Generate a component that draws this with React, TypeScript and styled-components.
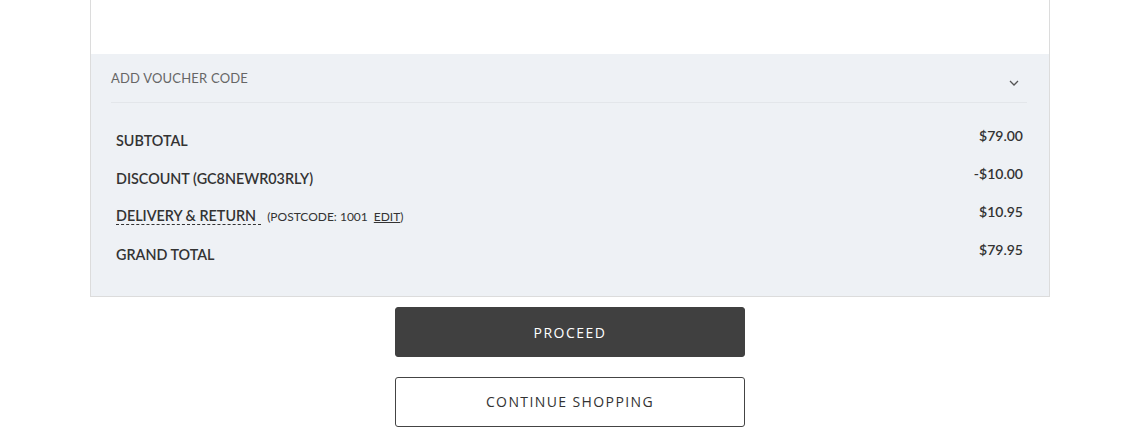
import React from "react";
import styled, { createGlobalStyle } from "styled-components";

const Global = createGlobalStyle`
  html, body { margin: 0; padding: 0; background: #fff; }
  body { font-family: Lato, "Open Sans", sans-serif; color: #333; }
`;

const Page = styled.div`
  width: 960px;
  margin-left: 90px;
`;

const Card = styled.div`
  border-left: 1px solid #dcdcdc;
  border-right: 1px solid #dcdcdc;
  border-bottom: 1px solid #dcdcdc;
`;

const WhiteArea = styled.div`
  height: 54px;
  background: #fff;
`;

const Panel = styled.div`
  background: #eef1f5;
  padding: 0 22px 23px 20px;
`;

const VoucherHeader = styled.div`
  height: 48px;
  display: flex;
  align-items: center;
  justify-content: space-between;
  border-bottom: 1px solid #e3e6ea;
  padding-right: 8px;
`;

const VoucherLabel = styled.span`
  font-family: Lato, sans-serif;
  font-size: 13px;
  color: #666;
  letter-spacing: 0.2px;
`;

const Chevron = styled.svg`
  width: 10px;
  height: 6px;
  margin-top: 9px;
`;

const Rows = styled.div`
  padding: 18px 4px 0 5px;
  display: flex;
  flex-direction: column;
`;

const Row = styled.div`
  height: 38px;
  display: flex;
  justify-content: space-between;
  align-items: center;
`;

const Label = styled.span`
  font-family: Lato, sans-serif;
  font-weight: 600;
  font-size: 14.35px;
  color: #333;
  display: flex;
  align-items: baseline;
`;

const Dashed = styled.span`
  border-bottom: 1px dashed #333;
  padding-right: 5px;
  line-height: 17px;
`;

const Note = styled.span`
  font-family: Lato, sans-serif;
  font-weight: 400;
  font-size: 12px;
  color: #333;
  margin-left: 6px;
`;

const EditLink = styled.a`
  color: #333;
  text-decoration: underline;
  margin-left: 6px;
`;

const Value = styled.span`
  font-family: Lato, sans-serif;
  font-weight: 600;
  font-size: 14px;
  color: #333;
  margin-top: -10px;
`;

const Actions = styled.div`
  display: flex;
  flex-direction: column;
  align-items: center;
  padding-top: 10px;
  gap: 20px;
`;

const Button = styled.button<{ $primary?: boolean }>`
  width: 350px;
  height: 50px;
  border-radius: 3px;
  border: 1px solid ${(p) => (p.$primary ? "#404040" : "#444")};
  background: ${(p) => (p.$primary ? "#404040" : "#fff")};
  color: ${(p) => (p.$primary ? "#fff" : "#333")};
  font-family: "Open Sans", sans-serif;
  font-size: 14px;
  line-height: 1;
  padding: ${(p) => (p.$primary ? "1px 0 0" : "0 0 1px")};
  letter-spacing: ${(p) => (p.$primary ? "1.5px" : "1.4px")};
  text-transform: uppercase;
  cursor: pointer;
`;

export default function App() {
  return (
    <Page>
      <Global />
      <Card>
        <WhiteArea />
        <Panel>
          <VoucherHeader>
            <VoucherLabel>ADD VOUCHER CODE</VoucherLabel>
            <Chevron viewBox="0 0 10 6">
              <path d="M1 1 L5 5 L9 1" fill="none" stroke="#555" strokeWidth="1.3" />
            </Chevron>
          </VoucherHeader>
          <Rows>
            <Row>
              <Label>SUBTOTAL</Label>
              <Value>$79.00</Value>
            </Row>
            <Row>
              <Label>DISCOUNT (GC8NEWR03RLY)</Label>
              <Value>-$10.00</Value>
            </Row>
            <Row>
              <Label>
                <Dashed>DELIVERY &amp; RETURN</Dashed>
                <Note>
                  (POSTCODE: 1001<EditLink>EDIT</EditLink>)
                </Note>
              </Label>
              <Value>$10.95</Value>
            </Row>
            <Row>
              <Label>GRAND TOTAL</Label>
              <Value>$79.95</Value>
            </Row>
          </Rows>
        </Panel>
      </Card>
      <Actions>
        <Button $primary>Proceed</Button>
        <Button>Continue Shopping</Button>
      </Actions>
    </Page>
  );
}
